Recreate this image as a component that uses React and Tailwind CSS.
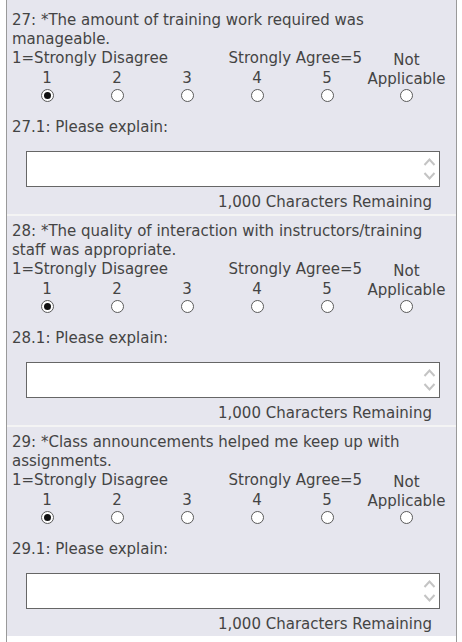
import React from "react";

const questions = [
  { n: "27", text: "*The amount of training work required was manageable." },
  { n: "28", text: "*The quality of interaction with instructors/training staff was appropriate." },
  { n: "29", text: "*Class announcements helped me keep up with assignments." },
];

function Radio({ checked }) {
  return (
    <span className="relative -top-[2px] w-[13px] h-[13px] rounded-full border border-[#5a5a5a] bg-white flex items-center justify-center">
      {checked && <span className="w-[7px] h-[7px] rounded-full bg-[#111]" />}
    </span>
  );
}

function Section({ q, first }) {
  return (
    <div className={`bg-[#e6e6ee] px-[5px] pb-[2px] ${first ? "pt-[11px]" : "pt-[6px] border-t-2 border-[#f4f4f4]"}`}>
      <div className="leading-[19px]">{q.n}: {q.text}</div>
      <div className="grid grid-cols-[70px_70px_70px_70px_70px_1fr] leading-[19px]">
        <div className="col-span-3 whitespace-nowrap">1=Strongly Disagree</div>
        <div className="col-span-2 text-right whitespace-nowrap">Strongly Agree=5</div>
        <div className="row-span-2 text-center pt-[2px]">Not<br />Applicable</div>
        {[1, 2, 3, 4, 5].map((i) => (
          <div key={i} className="text-center">{i}</div>
        ))}
        {[1, 2, 3, 4, 5, 6].map((i) => (
          <div key={i} className="h-[19px] flex justify-center items-center -mt-[1px]">
            <Radio checked={i === 1} />
          </div>
        ))}
      </div>
      <div className="leading-[19px] mt-[11px]">{q.n}.1: Please explain:</div>
      <div className="ml-[14px] mr-[11px] mt-[14px] h-[36px] bg-white border border-[#666] relative">
        <svg className="absolute right-[3px] top-[4px]" width="13" height="26" viewBox="0 0 13 26" fill="none" stroke="#c4c4c4" strokeWidth="2">
          <path d="M1.5 9 L6.5 3.5 L11.5 9" />
          <path d="M1.5 17 L6.5 22.5 L11.5 17" />
        </svg>
      </div>
      <div className="leading-[19px] mt-[6px] text-right pr-[19px]">1,000 Characters Remaining</div>
    </div>
  );
}

export default function App() {
  return (
    <div className="bg-white min-h-[642px]" style={{ fontFamily: '"DejaVu Sans", Verdana, sans-serif' }}>
      <div className="ml-[6px] w-[451px] border-l border-r border-[#9a9a9a] text-[15px] text-[#444] min-h-[642px]">
        {questions.map((q, i) => (
          <Section key={q.n} q={q} first={i === 0} />
        ))}
      </div>
    </div>
  );
}
